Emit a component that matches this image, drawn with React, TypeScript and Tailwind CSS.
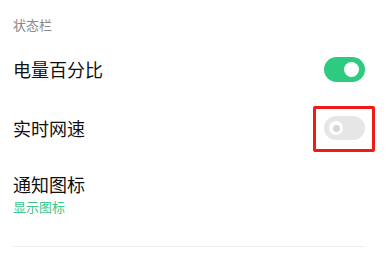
export default function App() {
  return (
    <main
      className="w-[390px] h-[254px] bg-white overflow-hidden"
      style={{ fontFamily: '"Noto Sans CJK SC", "Noto Sans", sans-serif' }}
    >
      {/* SECTION HEADER */}
      <div className="pl-[13px] pt-[16px] h-[40px] text-[13px] leading-[18px] text-[#8a8a8a]">状态栏</div>

      {/* BATTERY PERCENT */}
      <div className="h-[58px] pl-[13px] pr-[25px] flex items-center justify-between">
        <span className="text-[18px] leading-[24px] text-[#111]">电量百分比</span>
        <div className="w-[41px] h-[25px] rounded-full bg-[#2dca7f] flex items-center justify-end pr-[6px]">
          <div className="w-[15px] h-[15px] rounded-full bg-white" />
        </div>
      </div>

      {/* NETWORK SPEED */}
      <div className="h-[60px] pl-[13px] pr-[25px] flex items-center justify-between">
        <span className="text-[18px] leading-[24px] text-[#111]">实时网速</span>
        <div className="relative">
          <div className="w-[41px] h-[24px] rounded-full bg-[#e6e6e6] flex items-center pl-[5px]">
            <div className="w-[14px] h-[14px] rounded-full bg-white flex items-center justify-center">
              <div className="w-[7px] h-[7px] rounded-full bg-[#d6d6d6]" />
            </div>
          </div>
          <div className="absolute left-[-11px] top-[-10px] w-[62px] h-[46px] border-[3px] border-[#f01b16] rounded-[2px]" />
        </div>
      </div>

      {/* NOTIFICATION ICONS */}
      <div className="pl-[13px] pt-[14px] flex flex-col">
        <span className="text-[18px] leading-[24px] text-[#111]">通知图标</span>
        <span className="mt-[1px] text-[13px] leading-[20px] text-[#3cc68a]">显示图标</span>
      </div>

      <div className="mt-[29px] mx-[13px] mr-[25px] h-px bg-[#eeeeee]" />
    </main>
  )
}
